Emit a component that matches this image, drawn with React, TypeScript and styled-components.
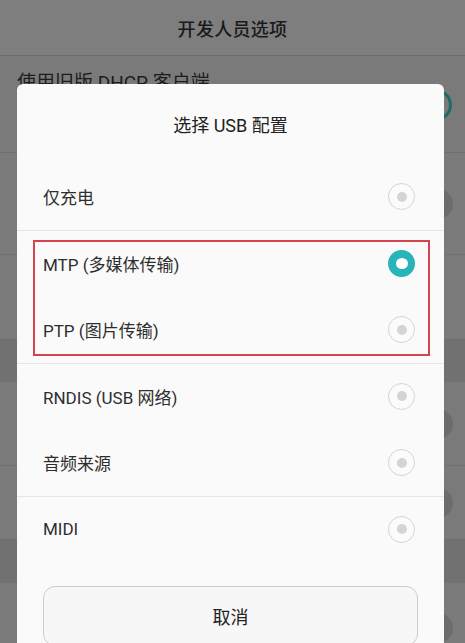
import styled, { createGlobalStyle } from "styled-components";

const GlobalStyle = createGlobalStyle`
  html, body {
    margin: 0;
    padding: 0;
    background: #7a7a7a;
  }
  body {
    font-family: "Roboto", "Noto Sans CJK SC", sans-serif;
    overflow: hidden;
  }
`;

interface UsbOption {
  label: string;
  selected?: boolean;
}

const options: UsbOption[] = [
  { label: "仅充电" },
  { label: "MTP (多媒体传输)", selected: true },
  { label: "PTP (图片传输)" },
  { label: "RNDIS (USB 网络)" },
  { label: "音频来源" },
  { label: "MIDI" },
];

const OptionRow = ({ option, divider }: { option: UsbOption; divider?: boolean }) => (
  <Row $divider={divider}>
    <RowLabel>{option.label}</RowLabel>
    <Radio $selected={option.selected}>
      <RadioDot $selected={option.selected} />
    </Radio>
  </Row>
);

const App = () => {
  const [charge, mtp, ptp, rndis, audio, midi] = options;

  return (
    <>
      <GlobalStyle />
      <Screen>
        <Header>开发人员选项</Header>
        <BgRow $height={97}>
          <BgText>使用旧版 DHCP 客户端</BgText>
          <Toggle />
        </BgRow>
        <BgRow $height={102}>
          <Knob />
        </BgRow>
        <BgRow $height={85} />
        <BgSection $height={42} />
        <BgRow $height={84}>
          <Knob />
        </BgRow>
        <BgRow $height={74}>
          <Knob />
        </BgRow>
        <BgSection $height={43} />
        <BgRow $height={90}>
          <Knob />
        </BgRow>

        <Dialog>
          <Title>选择 USB 配置</Title>
          <OptionRow option={charge} divider />
          <Highlight>
            <OptionRow option={mtp} />
            <OptionRow option={ptp} divider />
          </Highlight>
          <OptionRow option={rndis} />
          <OptionRow option={audio} divider />
          <OptionRow option={midi} />
          <CancelButton>取消</CancelButton>
        </Dialog>
      </Screen>
    </>
  );
};

export default App;

const Screen = styled.div`
  position: relative;
  width: 465px;
  height: 643px;
  overflow: hidden;
  background: #7a7a7a;
  display: flex;
  flex-direction: column;
`;

const Header = styled.div`
  height: 55px;
  flex-shrink: 0;
  display: flex;
  align-items: center;
  justify-content: center;
  background: #7e7e7e;
  border-bottom: 1px solid #6c6c6c;
  color: #1a1a1a;
  font-size: 18px;
  font-weight: 500;
  letter-spacing: 0.3px;
`;

const BgRow = styled.div<{ $height: number }>`
  position: relative;
  height: ${(p) => p.$height}px;
  flex-shrink: 0;
  border-bottom: 1px solid #6f6f6f;
  padding: 14px 17px 0;
  box-sizing: border-box;
`;

const BgSection = styled.div<{ $height: number }>`
  height: ${(p) => p.$height}px;
  flex-shrink: 0;
  background: #717171;
`;

const BgText = styled.div`
  color: #1c1c1c;
  font-size: 19px;
  line-height: 26px;
`;

const Toggle = styled.div`
  position: absolute;
  right: 13px;
  top: 33px;
  width: 26px;
  height: 26px;
  border-radius: 50%;
  border: 3px solid #1f6a66;
`;

const Knob = styled.div`
  position: absolute;
  right: 12px;
  top: 50%;
  transform: translateY(-50%);
  width: 30px;
  height: 30px;
  border-radius: 50%;
  background: #6c6c6c;
`;

const Dialog = styled.div`
  position: absolute;
  left: 17px;
  top: 84px;
  width: 427px;
  height: 600px;
  background: #fafafa;
  border-radius: 6px;
  display: flex;
  flex-direction: column;
`;

const Title = styled.div`
  height: 80px;
  display: flex;
  align-items: center;
  justify-content: center;
  color: #222;
  font-size: 18px;
`;

const Highlight = styled.div`
  position: relative;

  &::after {
    content: "";
    position: absolute;
    inset: 9px 14px 8px 16px;
    border: 2px solid #d6434c;
    pointer-events: none;
  }
`;

const Row = styled.div<{ $divider?: boolean }>`
  height: 66.5px;
  box-sizing: border-box;
  display: flex;
  align-items: center;
  justify-content: space-between;
  padding: 0 29px 0 26px;
  border-bottom: 1px solid ${(p) => (p.$divider ? "#e6e6e6" : "transparent")};
`;

const RowLabel = styled.span`
  color: #2e2e2e;
  font-size: 17px;
`;

const Radio = styled.div<{ $selected?: boolean }>`
  width: 27px;
  height: 27px;
  box-sizing: border-box;
  border-radius: 50%;
  display: flex;
  align-items: center;
  justify-content: center;
  background: ${(p) => (p.$selected ? "#28b4b8" : "#fbfbfb")};
  border: ${(p) => (p.$selected ? "none" : "1.5px solid #d3d3d3")};
`;

const RadioDot = styled.div<{ $selected?: boolean }>`
  width: ${(p) => (p.$selected ? 12 : 10)}px;
  height: ${(p) => (p.$selected ? 11 : 10)}px;
  border-radius: 50%;
  background: ${(p) => (p.$selected ? "#fff" : "#d4d4d4")};
`;

const CancelButton = styled.div`
  margin: 23px 26px 0;
  height: 58px;
  border: 1px solid #cdcdcd;
  border-radius: 12px;
  background: #f7f7f7;
  display: flex;
  align-items: center;
  justify-content: center;
  color: #222;
  font-size: 18px;
`;
